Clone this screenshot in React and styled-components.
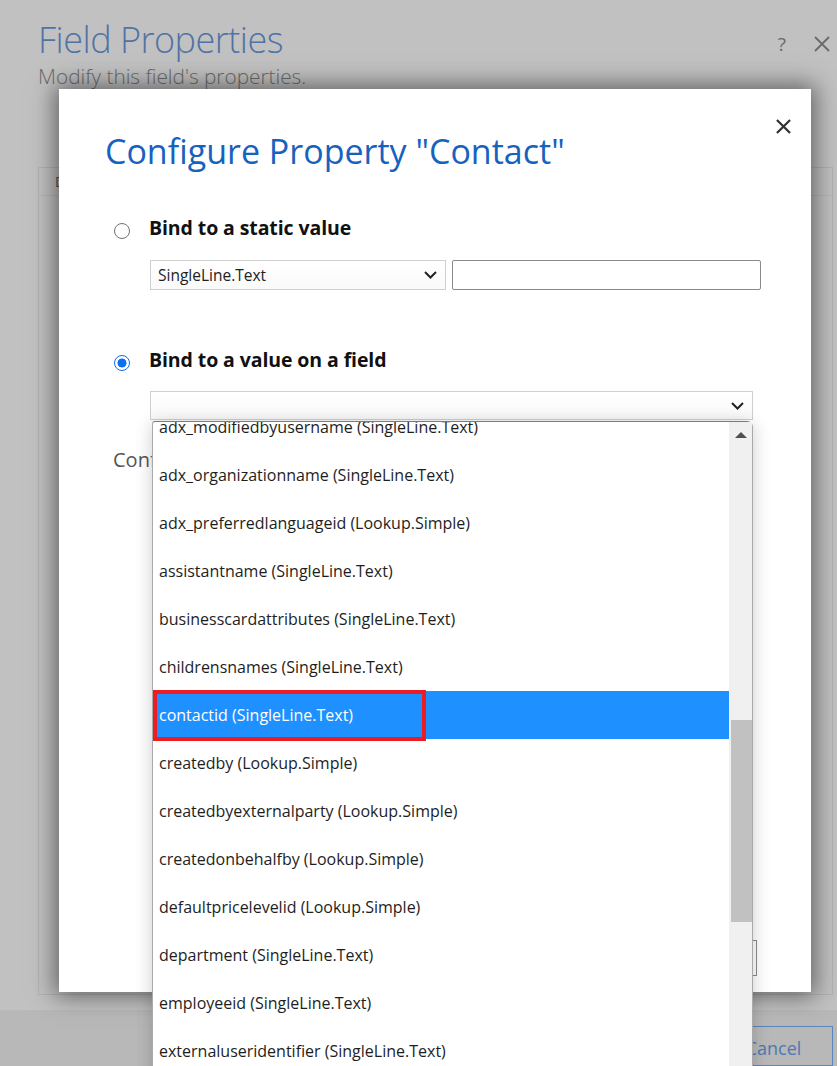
import React from "react";
import styled, { createGlobalStyle } from "styled-components";

const GlobalStyle = createGlobalStyle`
  html, body { margin: 0; padding: 0; }
  body { font-family: "Open Sans", "Noto Sans", sans-serif; }
  * { box-sizing: border-box; }
`;

const ROW_H = 48;
const SCROLL_OFFSET = 19;

const fields = [
  "adx_modifiedbyusername (SingleLine.Text)",
  "adx_organizationname (SingleLine.Text)",
  "adx_preferredlanguageid (Lookup.Simple)",
  "assistantname (SingleLine.Text)",
  "businesscardattributes (SingleLine.Text)",
  "childrensnames (SingleLine.Text)",
  "contactid (SingleLine.Text)",
  "createdby (Lookup.Simple)",
  "createdbyexternalparty (Lookup.Simple)",
  "createdonbehalfby (Lookup.Simple)",
  "defaultpricelevelid (Lookup.Simple)",
  "department (SingleLine.Text)",
  "employeeid (SingleLine.Text)",
  "externaluseridentifier (SingleLine.Text)",
  "familystatuscode (Picklist)",
];

const Chevron = () => (
  <svg width="13" height="8" viewBox="0 0 13 8">
    <path d="M1 1 L6.5 6.5 L12 1" fill="none" stroke="#222" strokeWidth="2" />
  </svg>
);

const Cross = ({ size, color, width }) => (
  <svg width={size} height={size} viewBox="0 0 16 16">
    <path d="M1 1 L15 15 M15 1 L1 15" stroke={color} strokeWidth={width} />
  </svg>
);

const App = () => {
  const selected = "contactid (SingleLine.Text)";

  return (
    <>
      <GlobalStyle />
      <Page>
        <Header>
          <div>
            <PageTitle>Field Properties</PageTitle>
            <PageSub>Modify this field's properties.</PageSub>
          </div>
          <HeaderIcons>
            <Help>?</Help>
            <Cross size={16} color="#6a6a6a" width={1.8} />
          </HeaderIcons>
        </Header>

        <Panel>
          <TabStrip>
            <Tab>Display</Tab>
          </TabStrip>
        </Panel>

        <Footer>
          <GhostButton>Cancel</GhostButton>
        </Footer>

        <Modal>
          <CloseButton>
            <Cross size={15} color="#333" width={2.4} />
          </CloseButton>
          <ModalTitle>Configure Property "Contact"</ModalTitle>

          <RadioRow $gap={44}>
            <Radio />
            <RadioLabel>Bind to a static value</RadioLabel>
          </RadioRow>
          <FieldRow $gap={17}>
            <Select $width={297}>
              <span>SingleLine.Text</span>
              <Chevron />
            </Select>
            <TextInput />
          </FieldRow>

          <RadioRow $gap={57}>
            <Radio $checked />
            <RadioLabel>Bind to a value on a field</RadioLabel>
          </RadioRow>
          <FieldRow $gap={16}>
            <SelectWrap>
              <Select $width={603} $height={29}>
                <span />
                <Chevron />
              </Select>
              <Dropdown>
                <Options>
                  <OptionsInner style={{ marginTop: -SCROLL_OFFSET }}>
                    {fields.map((f) => (
                      <Option key={f} $active={f === selected}>
                        {f}
                        {f === selected && <Marker />}
                      </Option>
                    ))}
                  </OptionsInner>
                </Options>
                <ScrollTrack>
                  <UpArrow />
                  <Thumb $top={282} $height={202} />
                </ScrollTrack>
              </Dropdown>
            </SelectWrap>
          </FieldRow>

          <Hint>Configure the value for this property.</Hint>

          <ModalFooter>
            <ModalButton>OK</ModalButton>
            <ModalButton>Cancel</ModalButton>
          </ModalFooter>
        </Modal>
      </Page>
    </>
  );
};

const Page = styled.div`
  position: relative;
  width: 837px;
  height: 1066px;
  overflow: hidden;
  background: #c1c1c1;
  display: flex;
  flex-direction: column;
`;

const Header = styled.div`
  display: flex;
  justify-content: space-between;
  padding: 20px 7px 0 38px;
`;

const PageTitle = styled.h1`
  margin: 0;
  font-family: "Open Sans", sans-serif;
  font-weight: 300;
  font-size: 36px;
  line-height: 40px;
  letter-spacing: -0.5px;
  color: #5073a5;
`;

const PageSub = styled.div`
  margin-top: 3px;
  font-family: "Open Sans", sans-serif;
  font-weight: 300;
  font-size: 20.8px;
  line-height: 26px;
  color: #6c6c6c;
`;

const HeaderIcons = styled.div`
  display: flex;
  align-items: center;
  gap: 28px;
  margin-top: 16px;
  height: 16px;
`;

const Help = styled.span`
  font-family: "Open Sans", sans-serif;
  font-size: 19px;
  color: #6a6a6a;
`;

const Panel = styled.div`
  margin: 78px 4px 0 38px;
  height: 832px;
  border: 1px solid #b2b2b2;
`;

const TabStrip = styled.div`
  height: 28px;
  border-bottom: 1px solid #b6b6b6;
  padding-left: 16px;
  display: flex;
  align-items: center;
`;

const Tab = styled.span`
  font-size: 14px;
  color: #4a4a4a;
`;

const Footer = styled.div`
  margin-top: 15px;
  flex: 1;
  background: #b8b8b8;
  display: flex;
  justify-content: flex-end;
  padding: 16px 4px 0 0;
`;

const GhostButton = styled.button`
  width: 119px;
  height: 40px;
  border: 1px solid #5a86bd;
  background: transparent;
  font-family: "Open Sans", sans-serif;
  font-size: 18px;
  line-height: 36px;
  padding-top: 3px;
  color: #4d79b3;
`;

const Modal = styled.div`
  position: absolute;
  left: 59px;
  top: 89px;
  width: 752px;
  height: 903px;
  background: #fff;
  box-shadow: 0 0 22px 4px rgba(0, 0, 0, 0.5);
  display: flex;
  flex-direction: column;
  padding: 42px 50px 16px 46px;
`;

const CloseButton = styled.div`
  position: absolute;
  top: 30px;
  right: 20px;
  display: flex;
`;

const ModalTitle = styled.h2`
  margin: 0;
  font-family: "Open Sans", sans-serif;
  font-weight: 400;
  font-size: 34px;
  line-height: 40px;
  color: #1662be;
`;

const RadioRow = styled.div`
  display: flex;
  align-items: center;
  height: 28px;
  margin-top: ${(p) => p.$gap}px;
  padding-left: 9px;
`;

const Radio = styled.span`
  width: 16px;
  height: 16px;
  border-radius: 50%;
  border: ${(p) => (p.$checked ? "1.5px solid #0b6ff2" : "1px solid #707070")};
  background: ${(p) =>
    p.$checked ? "radial-gradient(circle, #0b6ff2 0 4.2px, #fff 4.8px)" : "#fff"};
  margin-top: 4px;
`;

const RadioLabel = styled.span`
  margin-left: 19px;
  margin-bottom: 4px;
  font-family: "Open Sans", sans-serif;
  font-weight: 700;
  font-size: 19.5px;
  letter-spacing: -0.1px;
  color: #111;
`;

const FieldRow = styled.div`
  display: flex;
  gap: 6px;
  margin-top: ${(p) => p.$gap}px;
  padding-left: 45px;
`;

const SelectWrap = styled.div`
  position: relative;
`;

const Select = styled.div`
  width: ${(p) => p.$width}px;
  height: ${(p) => p.$height || 30}px;
  border: 1px solid #cfcfcf;
  background: linear-gradient(#fff, #fafafa);
  display: flex;
  align-items: center;
  justify-content: space-between;
  padding: 0 8px 0 7px;
  font-size: 15.5px;
  color: #222;
`;

const TextInput = styled.div`
  width: 310px;
  height: 30px;
  border: 1px solid #8a8a8a;
  border-radius: 2px;
  background: #fff;
`;

const Dropdown = styled.div`
  position: absolute;
  top: calc(100% + 1px);
  left: 2px;
  right: 0;
  height: 700px;
  display: flex;
  background: #fff;
  border: 1px solid #a9a9a9;
  border-top-color: #7a7a7a;
  border-radius: 3px 6px 0 0;
  box-shadow: 0 2px 18px rgba(0, 0, 0, 0.2);
  z-index: 2;
`;

const Options = styled.div`
  flex: 1;
  overflow: hidden;
`;

const OptionsInner = styled.div`
  display: flex;
  flex-direction: column;
`;

const Option = styled.div`
  position: relative;
  height: ${ROW_H}px;
  flex-shrink: 0;
  display: flex;
  align-items: center;
  padding-left: 6px;
  font-family: "Open Sans", sans-serif;
  font-size: 16px;
  color: ${(p) => (p.$active ? "#fff" : "#1e1e1e")};
  background: ${(p) => (p.$active ? "#1e90ff" : "transparent")};
`;

const Marker = styled.span`
  position: absolute;
  left: 0;
  top: -1px;
  width: 273px;
  height: 51px;
  border: 4px solid #ec1c24;
`;

const ScrollTrack = styled.div`
  position: relative;
  width: 23px;
  background: #f0f0f0;
  display: flex;
  flex-direction: column;
  align-items: center;
`;

const UpArrow = styled.span`
  margin-top: 10px;
  width: 0;
  height: 0;
  border-left: 6px solid transparent;
  border-right: 6px solid transparent;
  border-bottom: 6px solid #505050;
`;

const Thumb = styled.span`
  margin-top: ${(p) => p.$top}px;
  margin-left: 2px;
  width: 21px;
  height: ${(p) => p.$height}px;
  background: #c1c1c1;
`;

const Hint = styled.div`
  margin-top: 26px;
  margin-left: 8px;
  font-family: "Open Sans", sans-serif;
  font-size: 20px;
  line-height: 28px;
  color: #555;
`;

const ModalFooter = styled.div`
  margin-top: auto;
  display: flex;
  justify-content: flex-end;
  gap: 10px;
  padding-right: 4px;
`;

const ModalButton = styled.button`
  width: 110px;
  height: 36px;
  border: 1px solid #8a8a8a;
  background: #fff;
  font-family: "Open Sans", sans-serif;
  font-size: 16px;
  color: #333;
`;

export default App;
